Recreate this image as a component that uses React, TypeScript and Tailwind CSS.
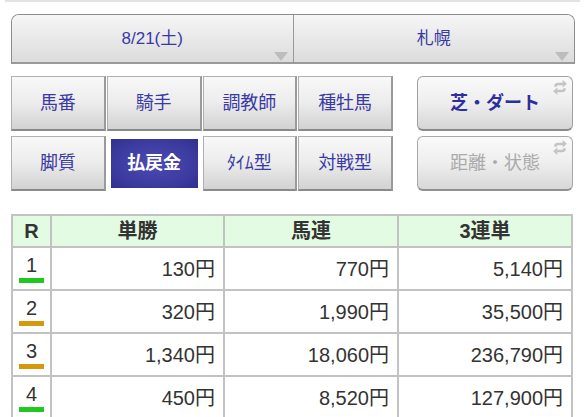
const font = "font-['Liberation_Sans','Noto_Sans_CJK_JP',sans-serif]";

const tabs = [
  ["馬番", "騎手", "調教師", "種牡馬"],
  ["脚質", "払戻金", "ﾀｲﾑ型", "対戦型"],
];

const rows = [
  { r: "1", bar: "bg-[#1ec81e]", tan: "130円", umaren: "770円", sanrentan: "5,140円" },
  { r: "2", bar: "bg-[#d49a0c]", tan: "320円", umaren: "1,990円", sanrentan: "35,500円" },
  { r: "3", bar: "bg-[#d49a0c]", tan: "1,340円", umaren: "18,060円", sanrentan: "236,790円" },
  { r: "4", bar: "bg-[#1ec81e]", tan: "450円", umaren: "8,520円", sanrentan: "127,900円" },
];

function Caret() {
  return (
    <svg width="14" height="9" viewBox="0 0 14 9" className="absolute bottom-[1px] right-[5px]">
      <path d="M0 0 H14 L7 9 Z" fill="#bdbdbd" />
    </svg>
  );
}

function SwapIcon() {
  return (
    <svg width="16" height="15" viewBox="0 0 15 14" className="absolute right-[4px] top-[3px]">
      <path d="M2 6 C2 3 4 2.5 6.5 2.5 H10 V0 L14 3.5 L10 7 V4.8 H6.5 C5 4.8 4.3 5.2 4.3 6.5 Z" fill="#c4c4c4" />
      <path d="M13 8 C13 11 11 11.5 8.5 11.5 H5 V14 L1 10.5 L5 7 V9.2 H8.5 C10 9.2 10.7 8.8 10.7 7.5 Z" fill="#c4c4c4" />
    </svg>
  );
}

export default function App() {
  return (
    <div className={`${font} h-[417px] w-[585px] overflow-hidden bg-white`}>
      <div className="mx-[5px] h-[2px] bg-[#e2e2e2]" />
      <div className="px-[11px]">
        <div className="mt-[12px] flex h-[50px] w-[564px] overflow-hidden rounded-t-[8px] border border-b-2 border-[#8c8c8c] border-b-[#9a9a9a]">
          <div className="relative flex flex-1 items-center justify-center border-r border-[#9a9a9a] bg-gradient-to-b from-[#f6f6f6] to-[#dcdcdc] text-[17px] text-[#3838a8]">
            8/21(土)
            <Caret />
          </div>
          <div className="relative flex flex-1 items-center justify-center bg-gradient-to-b from-[#f6f6f6] to-[#dcdcdc] text-[17px] text-[#3838a8]">
            札幌
            <Caret />
          </div>
        </div>

        <div className="mt-[12px] flex w-[562px] gap-[24px]">
          <div className="grid w-[382px] grid-cols-4 gap-x-[1px] gap-y-[5px]">
            {tabs.flat().map((t) =>
              t === "払戻金" ? (
                <div key={t} className="flex h-[55px] items-center justify-center px-[4px] py-[3px]">
                  <div className="flex h-full w-full items-center justify-center bg-[radial-gradient(ellipse_at_center,#4a4ab4_0%,#3a3a9e_70%,#30308c_100%)] text-[18px] font-bold text-white">
                    {t}
                  </div>
                </div>
              ) : (
                <div
                  key={t}
                  className="flex h-[55px] items-center justify-center border border-[#b0b0b0] border-b-2 border-r-2 border-b-[#8a8a8a] border-r-[#9a9a9a] bg-gradient-to-b from-[#f8f8f8] via-[#ececec] to-[#d2d2d2] text-[18px] text-[#3a3aa4]"
                >
                  {t}
                </div>
              )
            )}
          </div>
          <div className="flex w-[156px] flex-col gap-[5px]">
            <div className="relative flex h-[55px] items-center justify-center rounded-[6px] border border-b-2 border-[#a0a0a0] border-b-[#8a8a8a] bg-gradient-to-b from-[#fafafa] via-[#eeeeee] to-[#d6d6d6] text-[18px] font-bold text-[#2e2e9e]">
              芝・ダート
              <SwapIcon />
            </div>
            <div className="relative flex h-[55px] items-center justify-center rounded-[6px] border border-b-2 border-[#a8a8a8] border-b-[#909090] bg-gradient-to-b from-[#fafafa] via-[#eeeeee] to-[#d8d8d8] text-[18px] text-[#aaaaaa]">
              距離・状態
              <SwapIcon />
            </div>
          </div>
        </div>

        <table className="mt-[23px] w-[560px] table-fixed border-collapse text-[#333]">
          <colgroup>
            <col className="w-[39px]" />
            <col className="w-[173px]" />
            <col className="w-[174px]" />
            <col className="w-[174px]" />
          </colgroup>
          <thead>
            <tr className="h-[31px] bg-[#e3fbe3] text-[20px] font-bold">
              <th className="border-2 border-[#c2c2c2] text-center">R</th>
              <th className="border-2 border-[#c2c2c2] text-center">単勝</th>
              <th className="border-2 border-[#c2c2c2] text-center">馬連</th>
              <th className="border-2 border-[#c2c2c2] text-center">3連単</th>
            </tr>
          </thead>
          <tbody>
            {rows.map((row) => (
              <tr key={row.r} className="h-[43px] text-[20px]">
                <td className="border-2 border-[#c2c2c2] p-0">
                  <div className="flex flex-col items-center">
                    <span className="leading-[21px]">{row.r}</span>
                    <span className={`mt-[2px] h-[5px] w-[25px] ${row.bar}`} />
                  </div>
                </td>
                <td className="border-2 border-[#c2c2c2] pr-[8px] text-right">{row.tan}</td>
                <td className="border-2 border-[#c2c2c2] pr-[8px] text-right">{row.umaren}</td>
                <td className="border-2 border-[#c2c2c2] pr-[8px] text-right">{row.sanrentan}</td>
              </tr>
            ))}
          </tbody>
        </table>
      </div>
    </div>
  );
}
